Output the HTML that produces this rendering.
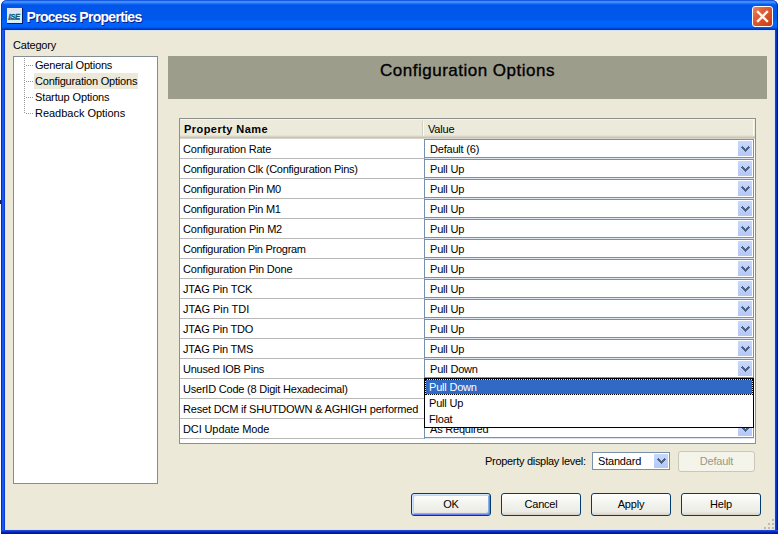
<!DOCTYPE html>
<html><head><meta charset="utf-8"><style>
*{margin:0;padding:0;box-sizing:border-box}
html,body{width:780px;height:534px;overflow:hidden;background:#fff;font-family:"Liberation Sans",sans-serif;font-size:11px;color:#000}
.a{position:absolute}
.t{position:absolute;white-space:pre;line-height:12px;letter-spacing:-0.2px}
#title{left:1px;top:0;width:777px;height:30px;border-radius:6px 6px 0 0;box-shadow:inset 1px 0 0 #0a34c0,inset -1px 0 0 #0a2aa8;
 background:linear-gradient(to bottom,#1a5ae0 0px,#1a5ae0 1px,#3a8cff 1px,#3d90ff 3px,#1c70fc 3px,#1c70fc 4px,#0a5ff0 4px,#0a5ff0 5px,#0056e8 5px,#0058ec 20px,#005ef4 20px,#005ef4 21px,#0064fc 21px,#0062fa 27px,#0056ee 27px,#0056ee 28px,#0044d0 28px,#0044d0 29px,#0a30a8 29px,#0a30a8 30px)}
#fl{left:1px;top:30px;width:4px;height:504px;background:linear-gradient(to right,#0c2cb4 0 1px,#1c56ec 1px 3px,#0a40d8 3px)}
#fr{left:775px;top:30px;width:3px;height:504px;background:linear-gradient(to right,#2050e0,#0a30c0 1px,#0a30c0 2px,#001a90 2px)}
#fb{left:1px;top:530px;width:777px;height:4px;background:linear-gradient(to bottom,#2048d8 0,#2048d8 1px,#0a34d0 1px,#0a34d0 2px,#0020b0 2px,#0020b0 3px,#001890 3px)}
#client{left:5px;top:30px;width:770px;height:500px;background:#ece9d8;border:1px solid #d8e4f8;border-right-color:#d8e4f8}
.ttl{color:#fff;font-weight:bold;font-size:14px;letter-spacing:-0.7px;text-shadow:1px 1px 0 #0a1e8a}
#close{left:752px;top:6px;width:21px;height:21px;border:1px solid #fff;border-radius:3px;background:linear-gradient(135deg,#ec8466 0%,#df5e38 35%,#d54a22 70%,#c63c14 100%)}
.box{position:absolute;background:#fff;border:1px solid #7f9db9}
.combo{position:absolute;background:#fff;border:1px solid #7890a8}
.combo.r{left:424px;width:330px;height:19px}
.grid{position:absolute;left:180px;width:244px;height:1px;background:#b8b8b8}
.vgrid{position:absolute;left:424px;width:330px;height:1px;background:linear-gradient(to right,#7f9db9 0 1px,#dfe6f0 1px)}
.btnd{position:absolute;border-radius:0;background:linear-gradient(to bottom,#c8d8fc,#b4c8f6);}
.combo.r .btnd{left:313px;top:1px;width:14px;height:15px}
.chev{position:absolute;left:0;top:0}
.btn{position:absolute;width:80px;height:23px;border:1px solid #003c74;border-radius:3px;background:linear-gradient(to bottom,#fff 0%,#f4f4f0 40%,#ecebe6 85%,#d6d0c5 100%)}
.btn span{position:absolute;left:0;right:0;top:4px;text-align:center;white-space:pre;letter-spacing:-0.2px;line-height:12px}
</style></head><body>
<div id="title" class="a"></div>
<div id="fl" class="a"></div>
<div id="fr" class="a"></div>
<div id="fb" class="a"></div>
<div id="client" class="a"></div>
<div class="a" style="left:0;top:200px;width:1px;height:4px;background:#102070"></div>

<!-- title icon -->
<svg class="a" style="left:6px;top:7px" width="18" height="18">
<rect x="1" y="1" width="15" height="15" fill="#dcecf6"/>
<rect x="1" y="1" width="15" height="4" fill="#e8e4ee"/>
<rect x="16" y="1" width="1" height="16" fill="#0c1c64"/>
<rect x="1" y="16" width="16" height="1" fill="#0c1c64"/>
<text x="2.5" y="12" font-family="Liberation Sans" font-weight="bold" font-style="italic" font-size="7.5" fill="#0f5a78" letter-spacing="-0.3" stroke="#0f5a78" stroke-width="0.3">ISE</text>
<rect x="2" y="12" width="12" height="1" fill="#1c4a70" opacity="0.7"/>
</svg>
<div class="t ttl" style="left:26.5px;top:9px;line-height:16px">Process Properties</div>
<div id="close" class="a">
 <svg width="19" height="19" style="position:absolute;left:0;top:0"><path d="M5 5 L14 14 M14 5 L5 14" stroke="#fff8f0" stroke-width="2.4" stroke-linecap="square"/></svg>
</div>

<div class="t" style="left:13px;top:39px">Category</div>

<!-- tree -->
<div class="a" style="left:13px;top:56px;width:145px;height:428px;background:#fff;border:1px solid #848c94"></div>
<div class="a" style="left:34px;top:73px;width:104px;height:16px;background:#ece9d8"></div>
<div class="a" style="left:24px;top:58px;width:1px;height:56px;background:repeating-linear-gradient(to bottom,#969696 0 1px,transparent 1px 2px)"></div>
<div class="a" style="left:26px;top:65px;width:8px;height:1px;background:repeating-linear-gradient(to right,#969696 0 1px,transparent 1px 2px)"></div>
<div class="a" style="left:26px;top:81px;width:8px;height:1px;background:repeating-linear-gradient(to right,#969696 0 1px,transparent 1px 2px)"></div>
<div class="a" style="left:26px;top:97px;width:8px;height:1px;background:repeating-linear-gradient(to right,#969696 0 1px,transparent 1px 2px)"></div>
<div class="a" style="left:26px;top:113px;width:8px;height:1px;background:repeating-linear-gradient(to right,#969696 0 1px,transparent 1px 2px)"></div>
<div class="t" style="left:35px;top:59px">General Options</div>
<div class="t" style="left:35px;top:75px">Configuration Options</div>
<div class="t" style="left:35px;top:91px;letter-spacing:-0.13px">Startup Options</div>
<div class="t" style="left:35px;top:107px;letter-spacing:-0.02px">Readback Options</div>

<!-- header band -->
<div class="a" style="left:168px;top:56px;width:599px;height:43px;background:#9d9d8c"></div>
<div class="t" style="left:168px;width:599px;text-align:center;top:62px;font-size:17px;line-height:18px;letter-spacing:0.5px;-webkit-text-stroke:0.35px #000">Configuration Options</div>

<!-- table -->
<div id="tbl" class="a" style="left:179px;top:118px;width:577px;height:326px;background:#fff;border:1px solid #8f8f8f"></div>
<div class="a" style="left:180px;top:119px;width:575px;height:20px;background:linear-gradient(to bottom,#ebeadb 0,#ebeadb 16px,#e6e2d2 16px 17px,#d8d4c6 17px 18px,#c8c5b8 18px 19px,#d8d6cc 19px)"></div>
<div class="a" style="left:180px;top:119px;width:575px;height:1px;background:#f6f5ee"></div>
<div class="a" style="left:422px;top:121px;width:1px;height:15px;background:#d2d0c0"></div>
<div class="a" style="left:423px;top:121px;width:1px;height:15px;background:#fafaf6"></div>
<div class="a" style="left:753px;top:120px;width:1px;height:16px;background:#fbfbf8"></div>
<div class="t" style="left:184px;top:123px;font-weight:bold;letter-spacing:0.45px">Property Name</div>
<div class="t" style="left:428px;top:123px">Value</div>
<!--ROWS-->
<div class="grid" style="top:158px"></div>
<div class="t" style="left:183px;top:143px;letter-spacing:-0.2px">Configuration Rate</div>
<div class="combo r" style="top:139px"><div class="t" style="left:5px;top:3px">Default (6)</div><div class="btnd"><svg width="9" height="6" class="chev" style="left:3px;top:5px" shape-rendering="crispEdges"><path d="M1 0h1v1h-1zM7 0h1v1h-1zM0 1h3v1h-3zM6 1h3v1h-3zM1 2h3v1h-3zM5 2h3v1h-3zM2 3h5v1h-5zM3 4h3v1h-3zM4 5h1v1h-1z" fill="#4d6185"/></svg></div></div>
<div class="vgrid" style="top:158px"></div>
<div class="grid" style="top:178px"></div>
<div class="t" style="left:183px;top:163px;letter-spacing:-0.26px">Configuration Clk (Configuration Pins)</div>
<div class="combo r" style="top:159px"><div class="t" style="left:5px;top:3px">Pull Up</div><div class="btnd"><svg width="9" height="6" class="chev" style="left:3px;top:5px" shape-rendering="crispEdges"><path d="M1 0h1v1h-1zM7 0h1v1h-1zM0 1h3v1h-3zM6 1h3v1h-3zM1 2h3v1h-3zM5 2h3v1h-3zM2 3h5v1h-5zM3 4h3v1h-3zM4 5h1v1h-1z" fill="#4d6185"/></svg></div></div>
<div class="vgrid" style="top:178px"></div>
<div class="grid" style="top:198px"></div>
<div class="t" style="left:183px;top:183px;letter-spacing:-0.237px">Configuration Pin M0</div>
<div class="combo r" style="top:179px"><div class="t" style="left:5px;top:3px">Pull Up</div><div class="btnd"><svg width="9" height="6" class="chev" style="left:3px;top:5px" shape-rendering="crispEdges"><path d="M1 0h1v1h-1zM7 0h1v1h-1zM0 1h3v1h-3zM6 1h3v1h-3zM1 2h3v1h-3zM5 2h3v1h-3zM2 3h5v1h-5zM3 4h3v1h-3zM4 5h1v1h-1z" fill="#4d6185"/></svg></div></div>
<div class="vgrid" style="top:198px"></div>
<div class="grid" style="top:218px"></div>
<div class="t" style="left:183px;top:203px;letter-spacing:-0.253px">Configuration Pin M1</div>
<div class="combo r" style="top:199px"><div class="t" style="left:5px;top:3px">Pull Up</div><div class="btnd"><svg width="9" height="6" class="chev" style="left:3px;top:5px" shape-rendering="crispEdges"><path d="M1 0h1v1h-1zM7 0h1v1h-1zM0 1h3v1h-3zM6 1h3v1h-3zM1 2h3v1h-3zM5 2h3v1h-3zM2 3h5v1h-5zM3 4h3v1h-3zM4 5h1v1h-1z" fill="#4d6185"/></svg></div></div>
<div class="vgrid" style="top:218px"></div>
<div class="grid" style="top:238px"></div>
<div class="t" style="left:183px;top:223px;letter-spacing:-0.184px">Configuration Pin M2</div>
<div class="combo r" style="top:219px"><div class="t" style="left:5px;top:3px">Pull Up</div><div class="btnd"><svg width="9" height="6" class="chev" style="left:3px;top:5px" shape-rendering="crispEdges"><path d="M1 0h1v1h-1zM7 0h1v1h-1zM0 1h3v1h-3zM6 1h3v1h-3zM1 2h3v1h-3zM5 2h3v1h-3zM2 3h5v1h-5zM3 4h3v1h-3zM4 5h1v1h-1z" fill="#4d6185"/></svg></div></div>
<div class="vgrid" style="top:238px"></div>
<div class="grid" style="top:258px"></div>
<div class="t" style="left:183px;top:243px;letter-spacing:-0.275px">Configuration Pin Program</div>
<div class="combo r" style="top:239px"><div class="t" style="left:5px;top:3px">Pull Up</div><div class="btnd"><svg width="9" height="6" class="chev" style="left:3px;top:5px" shape-rendering="crispEdges"><path d="M1 0h1v1h-1zM7 0h1v1h-1zM0 1h3v1h-3zM6 1h3v1h-3zM1 2h3v1h-3zM5 2h3v1h-3zM2 3h5v1h-5zM3 4h3v1h-3zM4 5h1v1h-1z" fill="#4d6185"/></svg></div></div>
<div class="vgrid" style="top:258px"></div>
<div class="grid" style="top:278px"></div>
<div class="t" style="left:183px;top:263px;letter-spacing:-0.2px">Configuration Pin Done</div>
<div class="combo r" style="top:259px"><div class="t" style="left:5px;top:3px">Pull Up</div><div class="btnd"><svg width="9" height="6" class="chev" style="left:3px;top:5px" shape-rendering="crispEdges"><path d="M1 0h1v1h-1zM7 0h1v1h-1zM0 1h3v1h-3zM6 1h3v1h-3zM1 2h3v1h-3zM5 2h3v1h-3zM2 3h5v1h-5zM3 4h3v1h-3zM4 5h1v1h-1z" fill="#4d6185"/></svg></div></div>
<div class="vgrid" style="top:278px"></div>
<div class="grid" style="top:298px"></div>
<div class="t" style="left:183px;top:283px;letter-spacing:-0.164px">JTAG Pin TCK</div>
<div class="combo r" style="top:279px"><div class="t" style="left:5px;top:3px">Pull Up</div><div class="btnd"><svg width="9" height="6" class="chev" style="left:3px;top:5px" shape-rendering="crispEdges"><path d="M1 0h1v1h-1zM7 0h1v1h-1zM0 1h3v1h-3zM6 1h3v1h-3zM1 2h3v1h-3zM5 2h3v1h-3zM2 3h5v1h-5zM3 4h3v1h-3zM4 5h1v1h-1z" fill="#4d6185"/></svg></div></div>
<div class="vgrid" style="top:298px"></div>
<div class="grid" style="top:318px"></div>
<div class="t" style="left:183px;top:303px;letter-spacing:-0.055px">JTAG Pin TDI</div>
<div class="combo r" style="top:299px"><div class="t" style="left:5px;top:3px">Pull Up</div><div class="btnd"><svg width="9" height="6" class="chev" style="left:3px;top:5px" shape-rendering="crispEdges"><path d="M1 0h1v1h-1zM7 0h1v1h-1zM0 1h3v1h-3zM6 1h3v1h-3zM1 2h3v1h-3zM5 2h3v1h-3zM2 3h5v1h-5zM3 4h3v1h-3zM4 5h1v1h-1z" fill="#4d6185"/></svg></div></div>
<div class="vgrid" style="top:318px"></div>
<div class="grid" style="top:338px"></div>
<div class="t" style="left:183px;top:323px;letter-spacing:-0.173px">JTAG Pin TDO</div>
<div class="combo r" style="top:319px"><div class="t" style="left:5px;top:3px">Pull Up</div><div class="btnd"><svg width="9" height="6" class="chev" style="left:3px;top:5px" shape-rendering="crispEdges"><path d="M1 0h1v1h-1zM7 0h1v1h-1zM0 1h3v1h-3zM6 1h3v1h-3zM1 2h3v1h-3zM5 2h3v1h-3zM2 3h5v1h-5zM3 4h3v1h-3zM4 5h1v1h-1z" fill="#4d6185"/></svg></div></div>
<div class="vgrid" style="top:338px"></div>
<div class="grid" style="top:358px"></div>
<div class="t" style="left:183px;top:343px;letter-spacing:-0.173px">JTAG Pin TMS</div>
<div class="combo r" style="top:339px"><div class="t" style="left:5px;top:3px">Pull Up</div><div class="btnd"><svg width="9" height="6" class="chev" style="left:3px;top:5px" shape-rendering="crispEdges"><path d="M1 0h1v1h-1zM7 0h1v1h-1zM0 1h3v1h-3zM6 1h3v1h-3zM1 2h3v1h-3zM5 2h3v1h-3zM2 3h5v1h-5zM3 4h3v1h-3zM4 5h1v1h-1z" fill="#4d6185"/></svg></div></div>
<div class="vgrid" style="top:358px"></div>
<div class="grid" style="top:378px"></div>
<div class="t" style="left:183px;top:363px;letter-spacing:-0.221px">Unused IOB Pins</div>
<div class="combo r" style="top:359px"><div class="t" style="left:5px;top:3px">Pull Down</div><div class="btnd"><svg width="9" height="6" class="chev" style="left:3px;top:5px" shape-rendering="crispEdges"><path d="M1 0h1v1h-1zM7 0h1v1h-1zM0 1h3v1h-3zM6 1h3v1h-3zM1 2h3v1h-3zM5 2h3v1h-3zM2 3h5v1h-5zM3 4h3v1h-3zM4 5h1v1h-1z" fill="#4d6185"/></svg></div></div>
<div class="vgrid" style="top:378px"></div>
<div class="grid" style="top:398px"></div>
<div class="t" style="left:183px;top:383px;letter-spacing:-0.216px">UserID Code (8 Digit Hexadecimal)</div>
<div class="combo r" style="top:379px"><div class="t" style="left:5px;top:3px">0xFFFFFFFF</div><div class="btnd"><svg width="9" height="6" class="chev" style="left:3px;top:5px" shape-rendering="crispEdges"><path d="M1 0h1v1h-1zM7 0h1v1h-1zM0 1h3v1h-3zM6 1h3v1h-3zM1 2h3v1h-3zM5 2h3v1h-3zM2 3h5v1h-5zM3 4h3v1h-3zM4 5h1v1h-1z" fill="#4d6185"/></svg></div></div>
<div class="vgrid" style="top:398px"></div>
<div class="grid" style="top:418px"></div>
<div class="t" style="left:183px;top:403px;letter-spacing:-0.187px">Reset DCM if SHUTDOWN &amp; AGHIGH performed</div>
<div class="combo r" style="top:399px"><div class="t" style="left:5px;top:3px">No</div><div class="btnd"><svg width="9" height="6" class="chev" style="left:3px;top:5px" shape-rendering="crispEdges"><path d="M1 0h1v1h-1zM7 0h1v1h-1zM0 1h3v1h-3zM6 1h3v1h-3zM1 2h3v1h-3zM5 2h3v1h-3zM2 3h5v1h-5zM3 4h3v1h-3zM4 5h1v1h-1z" fill="#4d6185"/></svg></div></div>
<div class="vgrid" style="top:418px"></div>
<div class="grid" style="top:438px"></div>
<div class="t" style="left:183px;top:423px;letter-spacing:-0.114px">DCI Update Mode</div>
<div class="combo r" style="top:419px"><div class="t" style="left:5px;top:3px">As Required</div><div class="btnd"><svg width="9" height="6" class="chev" style="left:3px;top:5px" shape-rendering="crispEdges"><path d="M1 0h1v1h-1zM7 0h1v1h-1zM0 1h3v1h-3zM6 1h3v1h-3zM1 2h3v1h-3zM5 2h3v1h-3zM2 3h5v1h-5zM3 4h3v1h-3zM4 5h1v1h-1z" fill="#4d6185"/></svg></div></div>
<div class="vgrid" style="top:438px"></div>
<!--/ROWS-->


<!-- popup list -->
<div class="a" style="left:424px;top:378px;width:330px;height:50px;background:#fff;border:1px solid #000"></div>
<div class="a" style="left:425px;top:379px;width:328px;height:16px;background:#316ac5;box-shadow:inset 0 0 0 1px #e8e4d0;outline:1px dotted #000;outline-offset:-1px"></div>
<div class="t" style="left:429px;top:381px;color:#fff">Pull Down</div>
<div class="t" style="left:429px;top:397px">Pull Up</div>
<div class="t" style="left:429px;top:413px">Float</div>

<!-- bottom controls -->
<div class="t" style="left:485px;top:455px;letter-spacing:-0.3px">Property display level:</div>
<div class="combo" style="left:592px;top:452px;width:78px;height:18px"><div class="t" style="left:5px;top:2px">Standard</div>
<div class="btnd" style="left:61px;top:1px;width:14px;height:14px"><svg width="9" height="6" class="chev" style="left:3px;top:4px" shape-rendering="crispEdges"><path d="M1 0h1v1h-1zM7 0h1v1h-1zM0 1h3v1h-3zM6 1h3v1h-3zM1 2h3v1h-3zM5 2h3v1h-3zM2 3h5v1h-5zM3 4h3v1h-3zM4 5h1v1h-1z" fill="#4d6185"/></svg></div></div>
<div class="a" style="left:678px;top:451px;width:77px;height:21px;border:1px solid #c9c7ba;border-radius:3px;background:#f5f4ea"></div>
<div class="t" style="left:678px;width:77px;text-align:center;top:455px;color:#98988a">Default</div>

<div class="btn" style="left:411px;top:493px;box-shadow:inset 1px 1px 0 #cee7ff,inset -1px -1px 0 #6982ee,inset 2px 2px 0 #bcd4f6,inset -2px -2px 0 #89ade4"><span>OK</span></div>
<div class="btn" style="left:501px;top:493px"><span>Cancel</span></div>
<div class="btn" style="left:591px;top:493px"><span>Apply</span></div>
<div class="btn" style="left:681px;top:493px"><span>Help</span></div>

<!-- grip -->
<div class="a" style="left:772px;top:519px;width:2px;height:2px;background:#c0bcaa"></div>
<div class="a" style="left:768px;top:523px;width:2px;height:2px;background:#c0bcaa"></div>
<div class="a" style="left:772px;top:523px;width:2px;height:2px;background:#c0bcaa"></div>
<div class="a" style="left:764px;top:527px;width:2px;height:2px;background:#c0bcaa"></div>
<div class="a" style="left:768px;top:527px;width:2px;height:2px;background:#c0bcaa"></div>
<div class="a" style="left:772px;top:527px;width:2px;height:2px;background:#c0bcaa"></div>
</body></html>
